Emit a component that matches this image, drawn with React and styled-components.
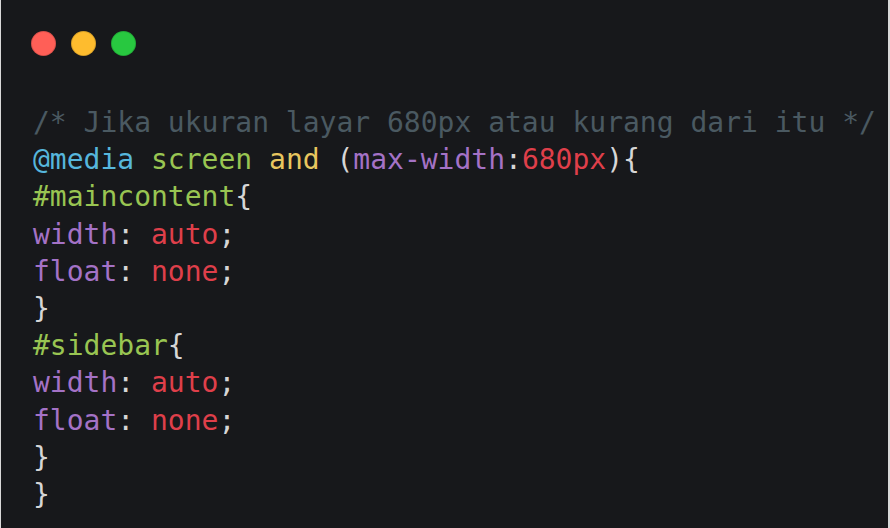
import React from "react";
import styled, { createGlobalStyle } from "styled-components";

const GlobalStyle = createGlobalStyle`
  html, body {
    margin: 0;
    padding: 0;
    background: #17181b;
  }
`;

const Window = styled.div`
  box-sizing: border-box;
  width: 890px;
  height: 528px;
  background: #17181b;
  border-left: 1px solid #d9d9d9;
  border-right: 2px solid #d9d9d9;
  padding: 31px 0 0 30px;
`;

const Dots = styled.div`
  display: flex;
  gap: 15px;
  margin-bottom: 48px;
`;

const Dot = styled.span`
  width: 25px;
  height: 25px;
  border-radius: 50%;
  background: ${(p) => p.color};
  box-shadow: inset 0 0 0 1px rgba(0, 0, 0, 0.15);
`;

const Code = styled.pre`
  margin: 0;
  padding-left: 2px;
  font-family: "DejaVu Sans Mono", monospace;
  font-size: 28px;
  line-height: 37.2px;
  color: #d4d4d4;
  white-space: pre;
`;

const colors = {
  comment: "#4a5961",
  at: "#56b6dc",
  green: "#99c552",
  yellow: "#e8c65f",
  purple: "#a472c6",
  red: "#df3f4a",
  plain: "#d6d6d6",
};

const Tok = styled.span`
  color: ${(p) => colors[p.k] || colors.plain};
`;

const lines = [
  [["comment", "/* Jika ukuran layar 680px atau kurang dari itu */"]],
  [
    ["at", "@media"],
    ["plain", " "],
    ["green", "screen"],
    ["plain", " "],
    ["yellow", "and"],
    ["plain", " ("],
    ["purple", "max-width"],
    ["plain", ":"],
    ["red", "680px"],
    ["plain", "){"],
  ],
  [["green", "#maincontent"], ["plain", "{"]],
  [["purple", "width"], ["plain", ": "], ["red", "auto"], ["plain", ";"]],
  [["purple", "float"], ["plain", ": "], ["red", "none"], ["plain", ";"]],
  [["plain", "}"]],
  [["green", "#sidebar"], ["plain", "{"]],
  [["purple", "width"], ["plain", ": "], ["red", "auto"], ["plain", ";"]],
  [["purple", "float"], ["plain", ": "], ["red", "none"], ["plain", ";"]],
  [["plain", "}"]],
  [["plain", "}"]],
];

const App = () => {
  return (
    <>
      <GlobalStyle />
      <Window>
        <Dots>
          <Dot color="#ff5f57" />
          <Dot color="#febc2e" />
          <Dot color="#28c840" />
        </Dots>
        <Code>
          {lines.map((line, i) => (
            <div key={i}>
              {line.map(([k, t], j) => (
                <Tok key={j} k={k}>
                  {t}
                </Tok>
              ))}
            </div>
          ))}
        </Code>
      </Window>
    </>
  );
};

export default App;
